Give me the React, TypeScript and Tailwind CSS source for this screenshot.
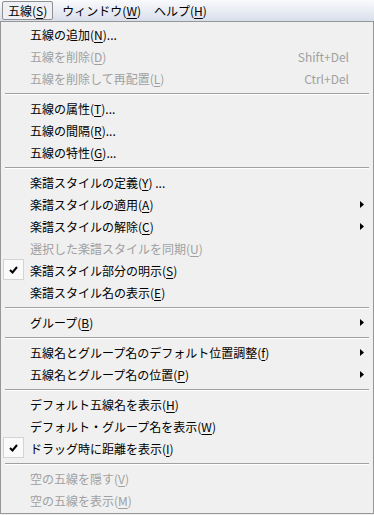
type Entry =
  | { sep: true }
  | {
      sep?: false;
      pre: string;
      k: string;
      post?: string;
      disabled?: boolean;
      shortcut?: string;
      submenu?: boolean;
      checked?: boolean;
    };

const entries: Entry[] = [
  { pre: '五線の追加', k: 'N', post: '...' },
  { pre: '五線を削除', k: 'D', disabled: true, shortcut: 'Shift+Del' },
  { pre: '五線を削除して再配置', k: 'L', disabled: true, shortcut: 'Ctrl+Del' },
  { sep: true },
  { pre: '五線の属性', k: 'T', post: '...' },
  { pre: '五線の間隔', k: 'R', post: '...' },
  { pre: '五線の特性', k: 'G', post: '...' },
  { sep: true },
  { pre: '楽譜スタイルの定義', k: 'Y', post: ' ...' },
  { pre: '楽譜スタイルの適用', k: 'A', submenu: true },
  { pre: '楽譜スタイルの解除', k: 'C', submenu: true },
  { pre: '選択した楽譜スタイルを同期', k: 'U', disabled: true },
  { pre: '楽譜スタイル部分の明示', k: 'S', checked: true },
  { pre: '楽譜スタイル名の表示', k: 'E' },
  { sep: true },
  { pre: 'グループ', k: 'B', submenu: true },
  { sep: true },
  { pre: '五線名とグループ名のデフォルト位置調整', k: 'f', submenu: true },
  { pre: '五線名とグループ名の位置', k: 'P', submenu: true },
  { sep: true },
  { pre: 'デフォルト五線名を表示', k: 'H' },
  { pre: 'デフォルト・グループ名を表示', k: 'W' },
  { pre: 'ドラッグ時に距離を表示', k: 'I', checked: true },
  { sep: true },
  { pre: '空の五線を隠す', k: 'V', disabled: true },
  { pre: '空の五線を表示', k: 'M', disabled: true },
];

function Label({ pre, k, post }: { pre: string; k: string; post?: string }) {
  return (
    <span>
      {pre}(<u className="underline-offset-2">{k}</u>){post}
    </span>
  );
}

export default function App() {
  return (
    <div
      className="w-[374px] h-[515px] bg-[#f0f0f0] text-[12px] leading-[14px] text-black overflow-hidden"
      style={{ fontFamily: '"Noto Sans CJK JP", "Liberation Sans", sans-serif' }}
    >
      {/* menu bar */}
      <div className="h-[21px] flex items-center bg-gradient-to-b from-[#f9fafc] to-[#d9dfeb]">
        <div className="ml-[2px] h-[19px] px-[5px] flex items-center border border-[#8e8f8f] rounded-[2px] bg-[#eef0f5]">
          <Label pre="五線" k="S" />
        </div>
        <div className="ml-[8px] px-[1px]">
          <Label pre="ウィンドウ" k="W" />
        </div>
        <div className="ml-[12px]">
          <Label pre="ヘルプ" k="H" />
        </div>
      </div>

      {/* dropdown */}
      <div className="border border-[#979797] bg-[#f0f0f0] pt-[2px] pb-[1px]">
        {entries.map((e, i) =>
          e.sep ? (
            <div key={i} className="h-[8px] flex items-center px-[4px]">
              <div className="w-full border-t border-[#a0a0a0] border-b border-b-white" />
            </div>
          ) : (
            <div
              key={i}
              className={`relative h-[22px] flex items-center pl-[29px] pr-[24px] ${
                e.disabled ? 'text-[#a0a0a0]' : 'text-black'
              }`}
            >
              {e.checked && (
                <div className="absolute left-[2px] top-[-1px] w-[21px] h-[21px] border border-[#d4d4d4] bg-[#fafafa] flex items-center justify-center">
                  <svg width="9" height="8" viewBox="0 0 9 8">
                    <path d="M1 4 L3.5 6.5 L8 1" fill="none" stroke="#000" strokeWidth="2" />
                  </svg>
                </div>
              )}
              <Label pre={e.pre} k={e.k} post={e.post} />
              {e.shortcut && <span className="ml-auto">{e.shortcut}</span>}
              {e.submenu && (
                <svg className="absolute right-[9px] top-[7px]" width="4" height="7" viewBox="0 0 4 7">
                  <path d="M0 0 L4 3.5 L0 7 Z" fill="#000" />
                </svg>
              )}
            </div>
          )
        )}
      </div>
    </div>
  );
}
